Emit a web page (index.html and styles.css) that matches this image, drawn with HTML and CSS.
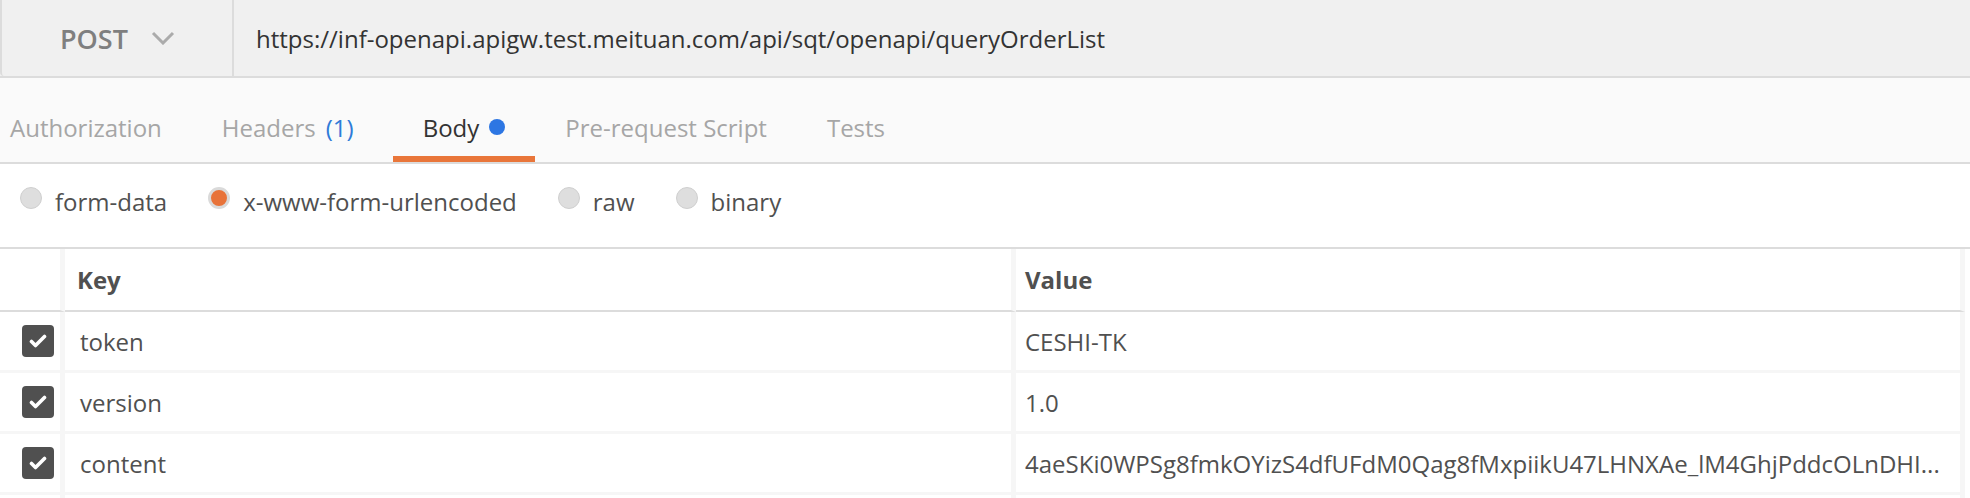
FILE: index.html
```html
<!DOCTYPE html>
<html>
  <head>
    <meta name="viewport" content="width=device-width, initial-scale=1.0" />
    <link rel="stylesheet" href="styles.css">
  </head>
  <body>
    <div class="request-bar">
      <div class="method">
        <span class="method-name">POST</span>
        <svg class="chevron" width="24" height="14" viewBox="0 0 24 14" fill="none" stroke="currentColor" stroke-width="3">
          <path d="M2 2l10 10L22 2"></path>
        </svg>
      </div>
      <div class="url">https://inf-openapi.apigw.test.meituan.com/api/sqt/openapi/queryOrderList</div>
    </div>

    <div class="tabs">
      <div class="tab">Authorization</div>
      <div class="tab">Headers <span class="count">(1)</span></div>
      <div class="tab active">Body <span class="dot"></span></div>
      <div class="tab">Pre-request Script</div>
      <div class="tab">Tests</div>
    </div>

    <div class="body-types">
      <label class="radio"><span class="circle"></span>form-data</label>
      <label class="radio"><span class="circle checked"></span>x-www-form-urlencoded</label>
      <label class="radio"><span class="circle"></span>raw</label>
      <label class="radio"><span class="circle"></span>binary</label>
    </div>

    <div class="kv">
      <div class="cell head check-col"></div>
      <div class="cell head">Key</div>
      <div class="cell head">Value</div>

      <div class="cell check-col"><span class="checkbox">
        <svg width="18" height="14" viewBox="0 0 18 14" fill="none" stroke="#fff" stroke-width="3.6" stroke-linecap="round" stroke-linejoin="round"><path d="M2.5 7.5l4 4L15.5 2.5"></path></svg>
      </span></div>
      <div class="cell">token</div>
      <div class="cell">CESHI-TK</div>

      <div class="cell check-col"><span class="checkbox">
        <svg width="18" height="14" viewBox="0 0 18 14" fill="none" stroke="#fff" stroke-width="3.6" stroke-linecap="round" stroke-linejoin="round"><path d="M2.5 7.5l4 4L15.5 2.5"></path></svg>
      </span></div>
      <div class="cell">version</div>
      <div class="cell">1.0</div>

      <div class="cell check-col"><span class="checkbox">
        <svg width="18" height="14" viewBox="0 0 18 14" fill="none" stroke="#fff" stroke-width="3.6" stroke-linecap="round" stroke-linejoin="round"><path d="M2.5 7.5l4 4L15.5 2.5"></path></svg>
      </span></div>
      <div class="cell">content</div>
      <div class="cell">4aeSKi0WPSg8fmkOYizS4dfUFdM0Qag8fMxpiikU47LHNXAe_lM4GhjPddcOLnDHI...</div>

      <div class="cell last check-col"></div>
      <div class="cell last"></div>
      <div class="cell last"></div>
    </div>
  </body>
</html>
```

FILE: styles.css
```css
* {
  box-sizing: border-box;
  margin: 0;
  padding: 0;
}

html,
body {
  height: 498px;
  overflow: hidden;
}

body {
  font-family: "Open Sans", "Liberation Sans", sans-serif;
  font-size: 24px;
  color: #505050;
  background: white;
}

.request-bar {
  display: flex;
  height: 78px;
  background: #f0f0f0;
  border-bottom: 2px solid #dcdcdc;
}

.method {
  display: flex;
  align-items: center;
  gap: 23px;
  width: 234px;
  padding-left: 58px;
  border-left: 2px solid #dcdcdc;
  border-right: 2px solid #dcdcdc;
  border-bottom-left-radius: 4px;
}

.method-name {
  font-size: 27px;
  font-weight: 600;
  color: #7f7f7f;
}

.chevron {
  color: #ababab;
}

.url {
  display: flex;
  align-items: center;
  padding-left: 22px;
  color: #333;
}

.tabs {
  display: flex;
  height: 86px;
  margin-left: -20px;
  background: #fafafa;
  border-bottom: 2px solid #dcdcdc;
}

.tab {
  display: flex;
  align-items: center;
  height: 84px;
  padding: 20px 30px 0;
  border-bottom: 6px solid transparent;
  color: #a6a6a6;
}

.tab .count {
  color: #2f7bd8;
  margin: 0 9px 0 10px;
}

.tab.active {
  color: #333;
  border-bottom-color: #e9763a;
}

.dot {
  width: 16px;
  height: 16px;
  margin-left: 10px;
  border-radius: 50%;
  background: #2d76e3;
}

.body-types {
  display: flex;
  align-items: center;
  gap: 41px;
  height: 85px;
  padding: 0 0 8px 20px;
  border-bottom: 2px solid #dcdcdc;
}

.radio {
  display: flex;
  align-items: center;
  gap: 13px;
  color: #505050;
}

.circle {
  width: 22px;
  height: 22px;
  margin-top: -8px;
  border-radius: 50%;
  background: #dedede;
  border: 1px solid #cfcfcf;
}

.circle.checked {
  background: #e8733a;
  border: 3px solid #dadada;
}

.kv {
  display: grid;
  grid-template-columns: 65px 951px 949px;
}

.cell {
  display: flex;
  align-items: center;
  height: 61px;
  padding-left: 9px;
  border-right: 5px solid #f6f6f6;
  border-bottom: 3px solid #f6f6f6;
  white-space: nowrap;
  overflow: hidden;
}

.cell:nth-child(3n + 2) {
  padding-left: 15px;
}

.cell.last {
  height: 8px;
  border-bottom: none;
}

.head {
  height: 63px;
  font-weight: 700;
  padding-left: 9px;
  border-bottom: 2px solid #dcdcdc;
}

.cell.head:nth-child(2) {
  padding-left: 12px;
}

.check-col {
  justify-content: flex-end;
  padding-right: 6px;
}

.checkbox {
  display: flex;
  justify-content: center;
  align-items: center;
  width: 32px;
  height: 32px;
  border-radius: 4px;
  background: #505050;
}
```
